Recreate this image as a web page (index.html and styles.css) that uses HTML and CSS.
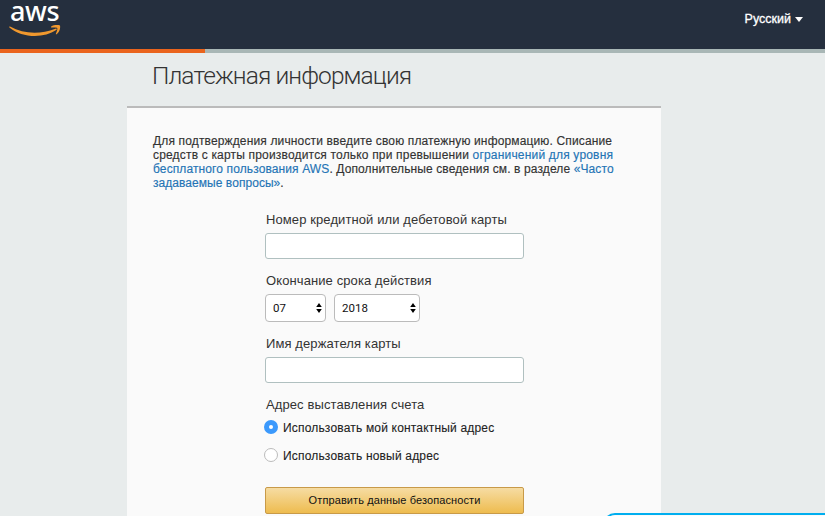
FILE: index.html
```html
<!DOCTYPE html>
<html lang="ru">
<head>
<meta charset="utf-8">
<title>Платежная информация</title>
<link rel="stylesheet" href="styles.css">
</head>
<body>
<div class="page">
  <header class="topbar">
    <div class="logo">
      <span class="logo-text">aws</span>
      <svg class="smile" width="54" height="14" viewBox="0 0 54 14"><path d="M1 1.500C15 9.200 31 9.600 46.500 3.700C47.800 3.300 48.200 4.400 47.200 5.100C35 13.500 13 13.300.4 2.500C0 1.800.4 1.200 1 1.500Z" fill="#f0982e"/><path d="M42.200 1.500C44.500-.3 49.500-.6 51 .5C51.700 3.500 50 8 47.500 9.300C46.800 9.600 46.700 9.100 47 8.500C48 6.200 48.700 4 48.200 3C47.200 2.100 44.500 2.400 42.700 2.600C42 2.700 41.700 2 42.200 1.500Z" fill="#f0982e"/></svg>
    </div>
    <div class="lang"><span>Русский</span><i class="caret"></i></div>
  </header>
  <div class="progress"><div class="progress-done"></div></div>
  <main class="content">
    <h1 class="title">Платежная информация</h1>
    <section class="panel">
      <p class="intro">
        <span class="l1">Для подтверждения личности введите свою платежную информацию. Списание</span><br>
        <span class="l2">средств с карты производится только при превышении <a>ограничений для уровня</a></span><br>
        <span class="l3"><a>бесплатного пользования AWS</a>. Дополнительные сведения см. в разделе <a>«Часто</a></span><br>
        <span class="l4"><a>задаваемые вопросы»</a>.</span>
      </p>
      <form class="form">
        <label class="label number">Номер кредитной или дебетовой карты</label>
        <div class="input"></div>
        <label class="label expiry">Окончание срока действия</label>
        <div class="selects">
          <div class="select month"><span>07</span><svg width="6" height="10" viewBox="0 0 6 10"><path d="M3 0L5.800 4H.2ZM3 10L5.800 6H.2Z"/></svg></div>
          <div class="select year"><span>2018</span><svg width="6" height="10" viewBox="0 0 6 10"><path d="M3 0L5.800 4H.2ZM3 10L5.800 6H.2Z"/></svg></div>
        </div>
        <label class="label holder">Имя держателя карты</label>
        <div class="input"></div>
        <label class="label billing">Адрес выставления счета</label>
        <div class="option contact"><i class="radio checked"></i><span>Использовать мой контактный адрес</span></div>
        <div class="option fresh"><i class="radio"></i><span>Использовать новый адрес</span></div>
        <div class="submit"><span>Отправить данные безопасности</span></div>
      </form>
    </section>
  </main>
  <div class="popup"></div>
</div>
</body>
</html>
```
FILE: styles.css
```css
* { box-sizing: border-box; }
body { margin: 0; background: #fff; font-family: "Liberation Sans", Arial, sans-serif; color: #333; }
.page { position: relative; width: 825px; height: 516px; overflow: hidden; background: #e8ecec; }
.topbar { display: flex; justify-content: space-between; height: 49px; background: #252f3e; }
.logo { display: flex; flex-direction: column; padding-left: 9px; }
.logo-text { height: 25px; padding-left: 1px; color: #fff; font: 500 27px/22px "Noto Sans", sans-serif; letter-spacing: -.4px; }
.smile { display: block; }
.lang { display: flex; align-items: center; gap: 4px; height: 38px; padding-right: 22px; color: #fff; font-size: 12.500px; -webkit-text-stroke: .3px #fff; }
.caret { border: 4px solid transparent; border-top: 5px solid #fff; border-bottom: 0; }
.progress { height: 4px; background: #a9b7b6; }
.progress-done { width: 205px; height: 4px; background: #ea641d; }
.content { width: 534px; margin-left: 127px; }
.title { height: 53px; margin: 0; padding: 7px 0 0 25px; font: 300 24.500px/32px Roboto, sans-serif; letter-spacing: -.900px; white-space: nowrap; }
.panel { height: 412px; border-top: 2px solid #bbb; background: #fafafa; padding: 26px 0 0 26px; }
.intro { margin: 0; font-size: 12px; line-height: 14px; white-space: nowrap; -webkit-text-stroke: .15px; }
.intro a { color: #2474b5; }
.l1 { letter-spacing: .145px; }
.l2 { letter-spacing: .180px; }
.l3 { letter-spacing: .110px; }
.l4 { letter-spacing: .050px; }
.form { width: 259px; margin: 22px 0 0 112px; }
.label { display: block; padding-left: 1px; height: 21px; font-size: 13px; line-height: 16px; letter-spacing: .100px; white-space: nowrap; }
.input { width: 259px; height: 26px; border: 1px solid #b0c0c0; border-radius: 3px; background: #fff; }
.expiry, .holder, .billing { margin-top: 14px; }
.selects { display: flex; gap: 8px; }
.select { display: flex; align-items: center; justify-content: space-between; height: 28px; padding: 0 3px 0 7px; border: 1px solid #bbb; border-radius: 4px; background: #fff; color: #111; font: 11.500px/14px Roboto, sans-serif; }
.month { width: 61px; }
.year { width: 86px; }
.billing { height: 16px; }
.option { display: flex; align-items: center; gap: 5px; height: 28px; margin-left: -1px; font-size: 12px; letter-spacing: .180px; color: #222; white-space: nowrap; -webkit-text-stroke: .1px; }
.option span { padding-top: 2px; }
.radio { width: 14px; height: 14px; border: 1px solid #bbb; border-radius: 50%; background: #fff; }
.checked { border: 5px solid #3b99fc; }
.submit { height: 27px; margin-top: 18px; border: 1px solid #c89a48; border-radius: 2px; background: linear-gradient(#f6dca3, #eebc4f); color: #111; font-size: 11px; line-height: 25px; letter-spacing: .100px; text-align: center; }
.popup { position: absolute; left: 603px; top: 513px; width: 260px; height: 60px; border: 2px solid #00aeef; border-radius: 12px; background: #fafafa; }
```
